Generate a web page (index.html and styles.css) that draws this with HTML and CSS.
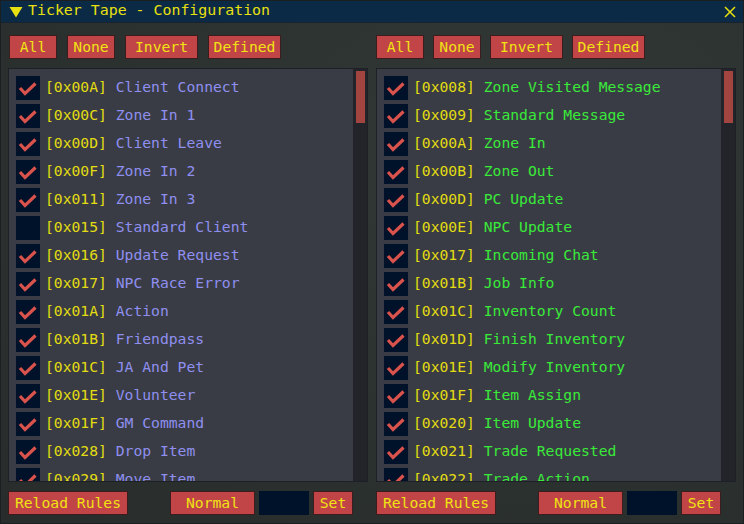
FILE: index.html
```html
<!DOCTYPE html>
<html>
<head>
<meta charset="utf-8">
<link rel="stylesheet" href="styles.css">
</head>
<body>
<div class="window">
  <div class="titlebar">
    <svg class="arrow" width="14" height="12" viewBox="0 0 14 12"><polygon points="0.5,1 13.5,1 7,11.5" fill="#e8e010"/></svg>
    <span class="title">Ticker Tape - Configuration</span>
    <svg class="close" width="12" height="12" viewBox="0 0 12 12"><path d="M1 1 L11 11 M11 1 L1 11" stroke="#e8e010" stroke-width="1.5" fill="none"/></svg>
  </div>
  <div class="panes">
    <div class="pane left">
      <div class="toolbar">
        <button class="btn short">All</button>
        <button class="btn short">None</button>
        <button class="btn wide">Invert</button>
        <button class="btn wide">Defined</button>
      </div>
      <div class="list">
        <div class="items">
          <div class="row"><span class="cb on"></span><span class="code">[0x00A]</span><span class="name">Client Connect</span></div>
          <div class="row"><span class="cb on"></span><span class="code">[0x00C]</span><span class="name">Zone In 1</span></div>
          <div class="row"><span class="cb on"></span><span class="code">[0x00D]</span><span class="name">Client Leave</span></div>
          <div class="row"><span class="cb on"></span><span class="code">[0x00F]</span><span class="name">Zone In 2</span></div>
          <div class="row"><span class="cb on"></span><span class="code">[0x011]</span><span class="name">Zone In 3</span></div>
          <div class="row"><span class="cb"></span><span class="code">[0x015]</span><span class="name">Standard Client</span></div>
          <div class="row"><span class="cb on"></span><span class="code">[0x016]</span><span class="name">Update Request</span></div>
          <div class="row"><span class="cb on"></span><span class="code">[0x017]</span><span class="name">NPC Race Error</span></div>
          <div class="row"><span class="cb on"></span><span class="code">[0x01A]</span><span class="name">Action</span></div>
          <div class="row"><span class="cb on"></span><span class="code">[0x01B]</span><span class="name">Friendpass</span></div>
          <div class="row"><span class="cb on"></span><span class="code">[0x01C]</span><span class="name">JA And Pet</span></div>
          <div class="row"><span class="cb on"></span><span class="code">[0x01E]</span><span class="name">Volunteer</span></div>
          <div class="row"><span class="cb on"></span><span class="code">[0x01F]</span><span class="name">GM Command</span></div>
          <div class="row"><span class="cb on"></span><span class="code">[0x028]</span><span class="name">Drop Item</span></div>
          <div class="row"><span class="cb on"></span><span class="code">[0x029]</span><span class="name">Move Item</span></div>
          <div class="row"><span class="cb on"></span><span class="code">[0x02A]</span><span class="name">Lock Item</span></div>
        </div>
        <div class="scroll"><div class="thumb"></div></div>
      </div>
      <div class="bottom">
        <button class="btn reload">Reload Rules</button>
        <button class="btn normal">Normal</button>
        <span class="input"></span>
        <button class="btn set">Set</button>
      </div>
    </div>
    <div class="pane right">
      <div class="toolbar">
        <button class="btn short">All</button>
        <button class="btn short">None</button>
        <button class="btn wide">Invert</button>
        <button class="btn wide">Defined</button>
      </div>
      <div class="list">
        <div class="items">
          <div class="row"><span class="cb on"></span><span class="code">[0x008]</span><span class="name">Zone Visited Message</span></div>
          <div class="row"><span class="cb on"></span><span class="code">[0x009]</span><span class="name">Standard Message</span></div>
          <div class="row"><span class="cb on"></span><span class="code">[0x00A]</span><span class="name">Zone In</span></div>
          <div class="row"><span class="cb on"></span><span class="code">[0x00B]</span><span class="name">Zone Out</span></div>
          <div class="row"><span class="cb on"></span><span class="code">[0x00D]</span><span class="name">PC Update</span></div>
          <div class="row"><span class="cb on"></span><span class="code">[0x00E]</span><span class="name">NPC Update</span></div>
          <div class="row"><span class="cb on"></span><span class="code">[0x017]</span><span class="name">Incoming Chat</span></div>
          <div class="row"><span class="cb on"></span><span class="code">[0x01B]</span><span class="name">Job Info</span></div>
          <div class="row"><span class="cb on"></span><span class="code">[0x01C]</span><span class="name">Inventory Count</span></div>
          <div class="row"><span class="cb on"></span><span class="code">[0x01D]</span><span class="name">Finish Inventory</span></div>
          <div class="row"><span class="cb on"></span><span class="code">[0x01E]</span><span class="name">Modify Inventory</span></div>
          <div class="row"><span class="cb on"></span><span class="code">[0x01F]</span><span class="name">Item Assign</span></div>
          <div class="row"><span class="cb on"></span><span class="code">[0x020]</span><span class="name">Item Update</span></div>
          <div class="row"><span class="cb on"></span><span class="code">[0x021]</span><span class="name">Trade Requested</span></div>
          <div class="row"><span class="cb on"></span><span class="code">[0x022]</span><span class="name">Trade Action</span></div>
          <div class="row"><span class="cb on"></span><span class="code">[0x023]</span><span class="name">Trade Item</span></div>
        </div>
        <div class="scroll"><div class="thumb"></div></div>
      </div>
      <div class="bottom">
        <button class="btn reload">Reload Rules</button>
        <button class="btn normal">Normal</button>
        <span class="input"></span>
        <button class="btn set">Set</button>
      </div>
    </div>
  </div>
</div>
</body>
</html>
```
FILE: styles.css
```css
* { box-sizing: border-box; }
html, body { margin: 0; padding: 0; }
body {
  width: 744px;
  height: 524px;
  background: #2c3230;
  font-family: "DejaVu Sans Mono", "Liberation Mono", monospace;
  font-size: 14.7px;
  overflow: hidden;
}
.window {
  width: 744px;
  height: 524px;
  border: 1px solid #1b1f22;
  background: radial-gradient(ellipse at 70% 30%, #323836 0%, #2b312f 60%, #282d2c 100%);
  display: flex;
  flex-direction: column;
}
.titlebar {
  height: 22px;
  flex: none;
  background: #0b2a46;
  border-bottom: 1px solid #1a2230;
  display: flex;
  align-items: center;
  padding-left: 8px;
  padding-right: 7px;
  color: #e8e010;
}
.arrow {
  display: block;
  flex: none;
  margin-right: 5px;
  margin-top: 1px;
}
.title {
  flex: 1;
  line-height: 1;
  font-size: 14.9px;
  padding-bottom: 2px;
}
.close { display: block; margin-top: 1px; }
.panes {
  flex: 1;
  display: flex;
  gap: 8px;
  padding: 12px 7px 8px 7px;
}
.pane {
  width: 360px;
  display: flex;
  flex-direction: column;
}
.toolbar {
  height: 24px;
  display: flex;
  gap: 10px;
  padding-left: 1px;
  margin-bottom: 9px;
}
.right .toolbar { gap: 9px; padding-left: 0; }
.btn {
  font: inherit;
  height: 24px;
  padding: 0 0 1px 0;
  margin: 0;
  background: #c14446;
  color: #f0e214;
  border: 1px solid #3d1c1e;
  text-align: center;
  line-height: 20px;
  white-space: nowrap;
  overflow: hidden;
}
.short { width: 48px; }
.wide { width: 73px; }
.list {
  height: 414px;
  flex: none;
  border: 1px solid #1d2024;
  background: #393c44;
  display: flex;
}
.items {
  flex: 1;
  overflow: hidden;
  padding: 7px 0 0 7px;
  display: flex;
  flex-direction: column;
  gap: 4px;
}
.row {
  height: 24px;
  flex: none;
  display: flex;
  align-items: center;
  white-space: nowrap;
}
.row .code, .row .name { padding-bottom: 3px; }
.cb {
  width: 24px;
  height: 24px;
  flex: none;
  background: #00122a;
  margin-right: 5px;
}
.cb.on {
  background: #00122a url("data:image/svg+xml,%3Csvg xmlns='http://www.w3.org/2000/svg' width='24' height='24'%3E%3Cpath d='M4 12 L9 17.5 L19.5 7.5' stroke='%23d9524b' stroke-width='3.2' fill='none'/%3E%3C/svg%3E") no-repeat;
}
.code { color: #e3dc12; margin-right: 8.8px; }
.left .name { color: #8f8ff0; }
.right .name { color: #3aea3a; }
.scroll {
  width: 14px;
  flex: none;
  background: #222429;
  padding: 2px 1px 0 3px;
}
.thumb {
  width: 9px;
  height: 52px;
  background: #a2443f;
}
.bottom {
  height: 24px;
  display: flex;
  gap: 4px;
  margin-top: 9px;
  padding-right: 15px;
}
.reload { width: 120px; margin-right: auto; }
.normal { width: 85px; }
.input { width: 50px; height: 24px; background: #00122a; }
.set { width: 40px; }
```
